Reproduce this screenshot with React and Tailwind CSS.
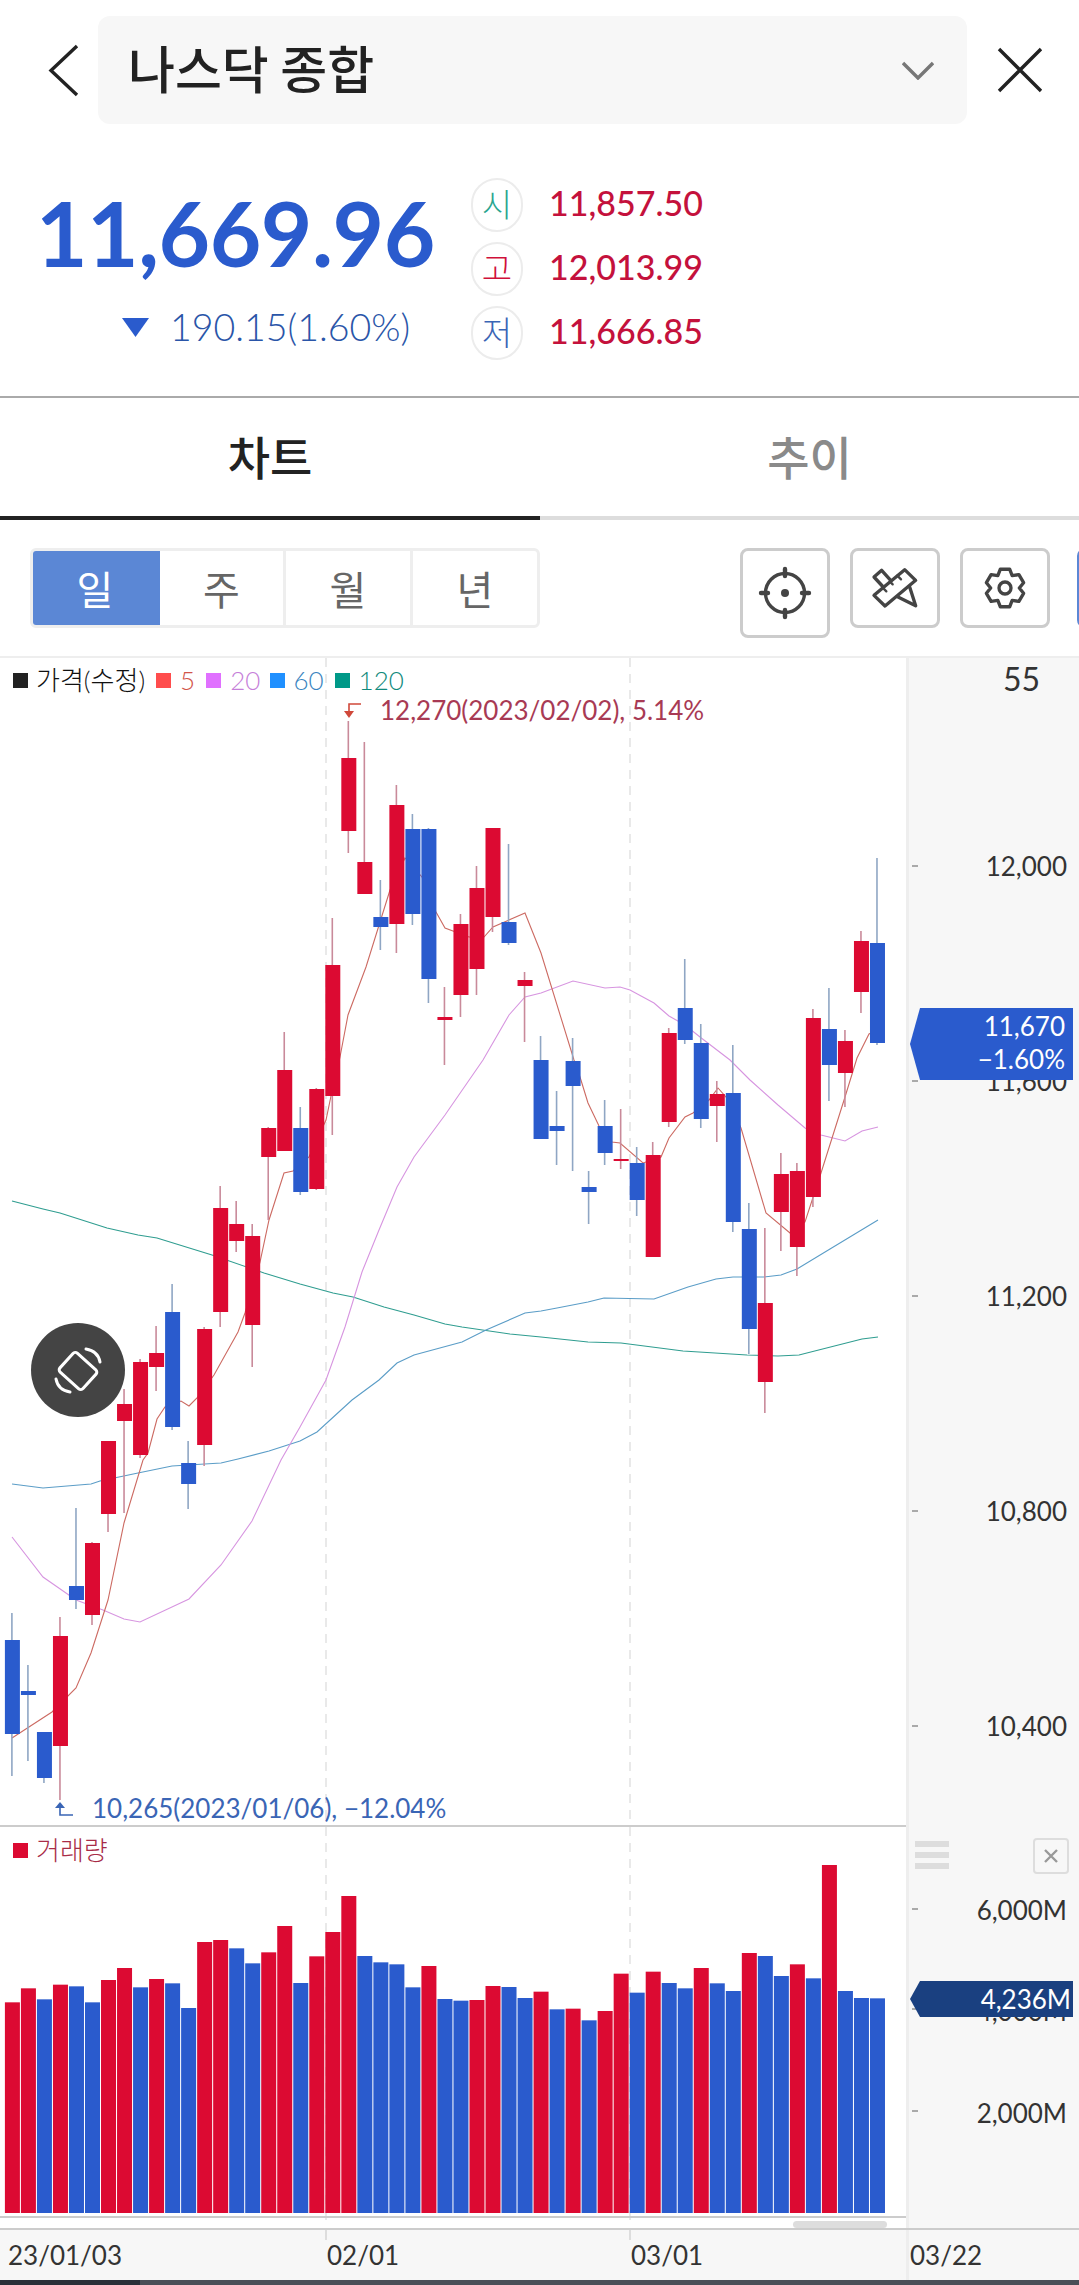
import React from "react";

const RED = "#dc0a32";
const BLUE = "#2a5bcd";
const cx = (i) => 12.4 + 16.02 * i;

// color, body top, body bottom, wick top, wick bottom
const candles = [
  ["b",1640,1734,1613,1776],["b",1691,1695,1665,1761],["b",1732,1778,1732,1783],["r",1636,1746,1617,1800],
  ["b",1586,1600,1508,1609],["r",1543,1615,1542,1625],["r",1441,1514,1441,1532],["r",1404,1421,1389,1513],
  ["r",1362,1455,1359,1458],["r",1353,1367,1326,1391],["b",1312,1427,1284,1430],["b",1463,1484,1441,1509],
  ["r",1329,1445,1327,1466],["r",1208,1312,1186,1327],["r",1224,1241,1201,1252],["r",1236,1325,1224,1367],
  ["r",1128,1157,1127,1220],["r",1070,1151,1032,1151],["b",1128,1192,1107,1195],["r",1089,1189,1088,1190],
  ["r",965,1096,918,1135],["r",758,831,721,853],["r",862,894,742,894],["b",917,927,880,950],
  ["r",805,924,785,953],["b",829,914,814,925],["b",829,979,828,1003],["r",1017,1020,987,1065],
  ["r",924,995,914,1017],["r",888,969,866,995],["r",828,917,828,932],["b",922,943,844,945],
  ["r",980,986,972,1042],["b",1060,1139,1036,1139],["b",1126,1131,1091,1165],["b",1061,1086,1038,1171],
  ["b",1187,1192,1171,1224],["b",1126,1153,1100,1165],["r",1159,1161,1109,1169],["b",1163,1200,1147,1216],
  ["r",1155,1257,1142,1257],["r",1033,1122,1028,1127],["b",1008,1040,959,1044],["b",1043,1119,1024,1128],
  ["r",1094,1106,1081,1142],["b",1093,1222,1045,1232],["b",1229,1329,1203,1354],["r",1303,1382,1228,1413],
  ["r",1174,1212,1153,1251],["r",1171,1247,1163,1276],["r",1018,1197,1009,1207],["b",1029,1065,988,1101],
  ["r",1041,1073,1030,1107],["r",941,992,931,1013],["b",943,1043,858,1045],
];

const volumes = [
  ["r",577],["r",535],["b",568],["r",524],["b",529],["b",577],["r",510],["r",474],["b",532],["r",507],["b",520],
  ["b",594],["r",396],["r",390],["b",415],["b",460],["r",427],["r",348],["b",519],["r",439],["r",366],["r",258],
  ["b",438],["b",457],["b",463],["b",532],["r",468],["b",567],["b",572],["r",570],["r",528],["b",531],["b",564],
  ["r",545],["b",598],["r",596],["b",631],["r",603],["r",491],["b",548],["r",485],["b",519],["b",535],["r",474],
  ["b",520],["b",543],["r",429],["b",438],["b",498],["r",463],["b",505],["r",165],["b",543],["b",564],["b",565],
];

const ma5 = "12,1738 52,1712 76,1688 91,1653 108,1600 124,1523 143,1460 148,1453 157,1419 165,1407 181,1401 189,1406 197,1398 214,1375 238,1332 245,1313 260,1262 269,1220 284,1173 293,1171 309,1157 326,1120 331,1096 340,1057 348,1015 366,967 390,890 405,858 422,877 436,912 445,928 469,937 484,937 493,927 525,913 541,953 574,1060 580,1077 588,1103 599,1126 612,1142 620,1143 643,1163 661,1157 669,1138 685,1117 693,1113 709,1100 718,1088 726,1097 741,1128 766,1213 790,1233 805,1222 821,1173 845,1097 857,1058 869,1034 878,1030";
const ma20 = "12,1537 43,1577 76,1600 103,1610 124,1619 140,1622 189,1599 221,1565 252,1521 281,1460 300,1427 326,1380 345,1327 362,1272 379,1230 397,1187 414,1157 445,1115 483,1060 509,1015 525,997 541,993 573,981 605,988 620,987 630,990 654,1003 669,1016 685,1025 700,1037 730,1060 750,1080 778,1105 805,1128 821,1135 845,1141 862,1131 878,1127";
const ma60 = "12,1484 43,1488 91,1484 100,1481 138,1473 172,1466 221,1463 238,1459 269,1451 300,1441 317,1432 352,1400 379,1380 397,1363 414,1355 462,1342 486,1330 525,1313 541,1311 557,1308 588,1302 604,1298 654,1299 688,1287 716,1279 733,1277 764,1277 781,1275 797,1269 830,1249 878,1220";
const ma120 = "12,1201 43,1209 60,1213 107,1228 138,1235 157,1238 212,1255 264,1273 300,1284 333,1293 353,1297 384,1307 414,1315 445,1324 462,1327 510,1334 541,1337 588,1342 621,1343 683,1351 747,1355 778,1356 799,1355 862,1339 878,1337";

function Crosshair() {
  return (
    <svg width="54" height="54" viewBox="0 0 54 54" fill="none" stroke="#444" strokeWidth="3.4" strokeLinecap="round">
      <circle cx="27" cy="27" r="19.5" />
      <path d="M27 3v7M27 44v7M3 27h7M44 27h7" strokeWidth="4.4" />
      <circle cx="27" cy="27" r="4" fill="#444" stroke="none" />
    </svg>
  );
}

function RulerPencil() {
  return (
    <svg width="52" height="42" viewBox="425 80 142 126" fill="none" stroke="#444" strokeWidth="10" strokeLinejoin="round" strokeLinecap="round">
      <path d="M525 88 558 120 466 197 433 165Z" />
      <path d="M503 106 514 117M481 124 489 132M459 142 470 153" strokeWidth="7" />
      <path d="M483 120 456 90 433 110 458 137" />
      <path d="M505 170 558 196 540 140" />
    </svg>
  );
}

function gearPath() {
  const pts = [];
  const r = (a, d) => [825 + d * Math.cos((a * Math.PI) / 180), 142 + d * Math.sin((a * Math.PI) / 180)];
  for (let k = 0; k < 6; k++) {
    const a = -90 + 60 * k;
    pts.push(r(a - 14, 58), r(a + 14, 58), r(a + 30, 43));
  }
  return "M" + pts.map((p) => p[0].toFixed(1) + " " + p[1].toFixed(1)).join("L") + "Z";
}

function Gear() {
  return (
    <svg width="48" height="46" viewBox="753 73 144 138" fill="none" stroke="#444" strokeWidth="10" strokeLinejoin="round">
      <path d={gearPath()} />
      <circle cx="825" cy="142" r="18" />
    </svg>
  );
}

function PriceTick({ cls }) {
  return <div className={`absolute left-[3px] h-[2px] w-[6px] bg-[#aaaaaa] ${cls}`} />;
}

function AxisLabel({ cls, children }) {
  return <div className={`absolute right-[12px] text-[26px] leading-[30px] font-normal text-[#333333] ${cls}`}>{children}</div>;
}

function Badge({ ch, color }) {
  return (
    <div className={`flex h-[54px] w-[52px] shrink-0 items-center justify-center rounded-full border-2 border-[#ececec] text-[33px] font-light ${color}`}>
      {ch}
    </div>
  );
}

export default function App() {
  return (
    <div className="flex h-[2285px] w-[1079px] flex-col overflow-hidden bg-white font-['Lato','Noto_Sans_CJK_KR',sans-serif]">
      {/* header */}
      <div className="flex h-[140px] items-start pt-[16px]">
        <div className="flex h-[108px] w-[98px] items-center justify-end pr-[19px]">
          <svg width="31" height="53" viewBox="0 0 31 53" fill="none" stroke="#222" strokeWidth="3.4">
            <path d="M29 2 3 26.5 29 51" />
          </svg>
        </div>
        <div className="flex h-[108px] w-[869px] items-center justify-between rounded-[12px] bg-[#f7f7f7] pl-[30px] pr-[33px]">
          <span className="-mt-[6px] font-['Noto_Sans_CJK_KR','Lato',sans-serif] text-[51px] leading-none font-medium text-[#222222]">나스닥 종합</span>
          <svg width="32" height="19" viewBox="0 0 32 19" fill="none" stroke="#777" strokeWidth="3.4">
            <path d="M1 2 16 17 31 2" />
          </svg>
        </div>
        <div className="flex h-[108px] flex-1 items-center justify-center pr-[6px]">
          <svg width="46" height="46" viewBox="0 0 46 46" fill="none" stroke="#222" strokeWidth="3.4">
            <path d="M2 2 44 44M44 2 2 44" />
          </svg>
        </div>
      </div>

      {/* quote */}
      <div className="flex h-[258px] border-b-2 border-[#aaaaaa]">
        <div className="w-[471px] pl-[36px] pt-[49px]">
          <div className="text-[89px] leading-[88px] font-bold tracking-[-0.5px] text-[#2a5bcd]">11,669.96</div>
          <div className="mt-[30px] flex h-[40px] items-center pl-[86px]">
            <svg width="27" height="19" viewBox="0 0 27 19"><path d="M0 0h27L13.5 19z" fill="#2a5bcd" /></svg>
            <span className="ml-[21px] text-[37.5px] leading-none font-light text-[#2a55a8]">190.15(1.60%)</span>
          </div>
        </div>
        <div className="flex flex-col gap-[10px] pt-[38px]">
          {[["시","text-[#2aa58f]","11,857.50"],["고","text-[#d0103a]","12,013.99"],["저","text-[#3a65b5]","11,666.85"]].map(([c,col,v]) => (
            <div key={c} className="flex h-[54px] items-center gap-[26px]">
              <Badge ch={c} color={col} />
              <span className="-mt-[4px] text-[34px] leading-none font-medium text-[#c4113c]">{v}</span>
            </div>
          ))}
        </div>
      </div>

      {/* tabs */}
      <div className="flex h-[122px]">
        <div className="flex w-[540px] items-center justify-center border-b-4 border-[#222222] pb-[4px] font-['Noto_Sans_CJK_KR',sans-serif] text-[46px] font-medium text-[#222222]">차트</div>
        <div className="flex flex-1 items-center justify-center border-b-4 border-[#dddddd] pb-[4px] font-['Noto_Sans_CJK_KR',sans-serif] text-[46px] font-medium text-[#8a8a8a]">추이</div>
      </div>

      {/* toolbar */}
      <div className="flex h-[136px] items-start overflow-hidden pl-[30px] pt-[28px]">
        <div className="flex h-[80px] w-[510px] shrink-0 overflow-hidden rounded-[6px] border-[3px] border-[#eeeeee] font-['Noto_Sans_CJK_KR',sans-serif] text-[40px] text-[#666666]">
          <div className="-m-[3px] flex w-[130px] shrink-0 items-center justify-center bg-[#5b87d5] text-white">일</div>
          <div className="ml-[3px] flex w-[126px] shrink-0 items-center justify-center border-r-[3px] border-[#eeeeee]">주</div>
          <div className="flex w-[127px] shrink-0 items-center justify-center border-r-[3px] border-[#eeeeee]">월</div>
          <div className="flex flex-1 items-center justify-center">년</div>
        </div>
        <div className="ml-[200px] flex h-[90px] w-[90px] shrink-0 items-center justify-center rounded-[8px] border-[3px] border-[#cccccc]">
          <Crosshair />
        </div>
        <div className="ml-[20px] flex h-[80px] w-[90px] shrink-0 items-center justify-center rounded-[8px] border-[3px] border-[#cccccc]">
          <RulerPencil />
        </div>
        <div className="ml-[20px] flex h-[80px] w-[90px] shrink-0 items-center justify-center rounded-[8px] border-[3px] border-[#cccccc]">
          <Gear />
        </div>
        <div className="ml-[27px] h-[80px] w-[30px] shrink-0 rounded-[8px] border-[3px] border-[#5b87d5]" />
      </div>

      {/* price pane */}
      <div className="flex h-[1171px] border-t-2 border-[#eeeeee]">
        <div className="relative w-[906px] border-b-2 border-[#cccccc]">
          <svg className="block" width="906" height="1167" viewBox="0 658 906 1167">
            <path d="M326 658V1825M630 658V1825" stroke="#e2e2e2" strokeWidth="1.5" strokeDasharray="9 7" />
            <polyline points={ma120} fill="none" stroke="#2f9d90" strokeWidth="1.1" />
            <polyline points={ma60} fill="none" stroke="#5b9dc7" strokeWidth="1.1" />
            <polyline points={ma20} fill="none" stroke="#d795e0" strokeWidth="1.1" />
            <polyline points={ma5} fill="none" stroke="#cc6a62" strokeWidth="1.1" />
            {candles.map(([c, t, b, wt, wb], i) => (
              <g key={i}>
                <line x1={cx(i) - 0.5} x2={cx(i) - 0.5} y1={wt} y2={wb} stroke={c === "r" ? "#c98a9a" : "#8fa6c4"} strokeWidth="1.6" />
                <rect x={cx(i) - 7.5} y={t} width="15" height={b - t} fill={c === "r" ? RED : BLUE} />
              </g>
            ))}
            <path d="M361 704H349V716" fill="none" stroke="#d0483a" strokeWidth="1.6" />
            <path d="M344 711H354L349 718z" fill="#d0483a" />
            <path d="M60 1805V1815H73" fill="none" stroke="#3a65b5" strokeWidth="1.6" />
            <path d="M55 1808H65L60 1802z" fill="#3a65b5" />
          </svg>

          <div className="absolute left-[13px] top-[7px] flex h-[30px] items-center text-[26px] font-light">
            <span className="h-[15px] w-[15px] bg-[#222222]" />
            <span className="ml-[8px] text-[#111111]">가격(수정)</span>
            <span className="ml-[11px] h-[15px] w-[15px] bg-[#ff4d4d]" />
            <span className="ml-[9px] text-[#d2554a]">5</span>
            <span className="ml-[11px] h-[15px] w-[15px] bg-[#e070ff]" />
            <span className="ml-[9px] text-[#c67fd9]">20</span>
            <span className="ml-[10px] h-[15px] w-[15px] bg-[#2090ff]" />
            <span className="ml-[8px] text-[#3a84c0]">60</span>
            <span className="ml-[11px] h-[15px] w-[15px] bg-[#009988]" />
            <span className="ml-[9px] text-[#0f8a7c]">120</span>
          </div>
          <div className="absolute left-[380px] top-[37px] text-[26px] leading-[30px] font-normal whitespace-nowrap text-[#a83a54]">12,270(2023/02/02), 5.14%</div>
          <div className="absolute left-[92px] top-[1135px] text-[26px] leading-[30px] font-normal whitespace-nowrap text-[#3a65b5]">10,265(2023/01/06), −12.04%</div>

          <div className="absolute left-[31px] top-[665px] flex h-[94px] w-[94px] items-center justify-center rounded-full bg-[#444444]">
            <svg width="56" height="56" viewBox="-28 -28 56 56" fill="none" stroke="#fff" strokeWidth="3" strokeLinecap="round" strokeLinejoin="round">
              <rect x="-15.5" y="-12.75" width="31" height="25.5" rx="3" transform="translate(0 1) rotate(42)" />
              <path d="M8 -21 Q20 -19 22 -8" />
              <path d="M-22 9 Q-20 20 -8 22" />
            </svg>
          </div>
        </div>

        <div className="relative flex-1 border-l-[3px] border-[#eeeeee] bg-[#f7f7f7]">
          <div className="absolute right-[39px] top-[2px] text-[32px] leading-[38px] font-normal text-[#333333]">55</div>
          <PriceTick cls="top-[207px]" />
          <PriceTick cls="top-[422px]" />
          <PriceTick cls="top-[637px]" />
          <PriceTick cls="top-[852px]" />
          <PriceTick cls="top-[1067px]" />
          <AxisLabel cls="top-[193px]">12,000</AxisLabel>
          <AxisLabel cls="top-[408px]">11,600</AxisLabel>
          <AxisLabel cls="top-[623px]">11,200</AxisLabel>
          <AxisLabel cls="top-[838px]">10,800</AxisLabel>
          <AxisLabel cls="top-[1053px]">10,400</AxisLabel>
          <div className="absolute left-[1px] top-[350px] h-[72px] w-[163px] bg-[#2a5bcd] [clip-path:polygon(10px_0,100%_0,100%_100%,10px_100%,0_50%)]">
            <div className="pr-[8px] pt-[2px] text-right text-[26px] leading-[33px] font-normal text-white">11,670<br />−1.60%</div>
          </div>
        </div>
      </div>

      {/* volume pane */}
      <div className="flex h-[403px] border-b-2 border-[#cccccc]">
        <div className="relative w-[906px]">
          <svg className="block" width="906" height="401" viewBox="0 1827 906 401">
            <path d="M326 1827V2222M630 1827V2222" stroke="#e2e2e2" strokeWidth="1.5" strokeDasharray="9 7" />
            {volumes.map(([c, t], i) => (
              <rect key={i} x={cx(i) - 7.5} y={1810 + t / 3} width="15" height={2213 - (1810 + t / 3)} fill={c === "r" ? RED : BLUE} />
            ))}
            <rect x="0" y="2216" width="906" height="2" fill="#cccccc" />
            <rect x="793" y="2221" width="94" height="7" rx="3.5" fill="#dddddd" />
          </svg>
          <div className="absolute left-[13px] top-[8px] flex h-[30px] items-center text-[26px] font-light text-[#a82c48]">
            <span className="h-[15px] w-[15px] bg-[#dc0a32]" />
            <span className="ml-[8px]">거래량</span>
          </div>
        </div>
        <div className="relative flex-1 border-l-[3px] border-[#eeeeee] bg-[#f7f7f7]">
          <div className="absolute left-[6px] top-[14px] flex w-[34px] flex-col gap-[5px]">
            <div className="h-[6px] bg-[#dddddd]" />
            <div className="h-[6px] bg-[#dddddd]" />
            <div className="h-[6px] bg-[#dddddd]" />
          </div>
          <div className="absolute left-[124px] top-[11px] flex h-[36px] w-[36px] items-center justify-center rounded-[4px] border-2 border-[#dddddd]">
            <svg width="14" height="14" viewBox="0 0 14 14" stroke="#999" strokeWidth="2.4"><path d="M1 1 13 13M13 1 1 13" /></svg>
          </div>
          <PriceTick cls="top-[81px]" />
          <PriceTick cls="top-[181px]" />
          <PriceTick cls="top-[283px]" />
          <AxisLabel cls="top-[68px]">6,000M</AxisLabel>
          <AxisLabel cls="top-[169px]">4,000M</AxisLabel>
          <AxisLabel cls="top-[271px]">2,000M</AxisLabel>
          <div className="absolute left-[1px] top-[154px] flex h-[36px] w-[163px] items-center justify-end bg-[#1a4080] pr-[2px] text-[26px] font-normal text-white [clip-path:polygon(10px_0,100%_0,100%_100%,10px_100%,0_50%)]">4,236M</div>
        </div>
      </div>

      {/* x axis */}
      <div className="relative flex h-[50px] bg-[#f7f7f7] text-[26px] leading-[50px] font-normal text-[#333333]">
        <span className="absolute left-[8px] top-0">23/01/03</span>
        <span className="absolute left-[327px] top-0">02/01</span>
        <span className="absolute left-[631px] top-0">03/01</span>
        <span className="absolute left-[910px] top-0">03/22</span>
        <div className="absolute left-[325px] top-0 h-[10px] w-[1.5px] bg-[#dddddd]" />
        <div className="absolute left-[629px] top-0 h-[10px] w-[1.5px] bg-[#dddddd]" />
        <div className="absolute left-[906px] top-0 h-full w-[3px] bg-[#eeeeee]" />
      </div>

      {/* bottom edge */}
      <div className="flex h-[5px]">
        <div className="w-[140px] bg-[#2a3038]" />
        <div className="flex-1 bg-[#4a4f57]" />
      </div>
    </div>
  );
}
